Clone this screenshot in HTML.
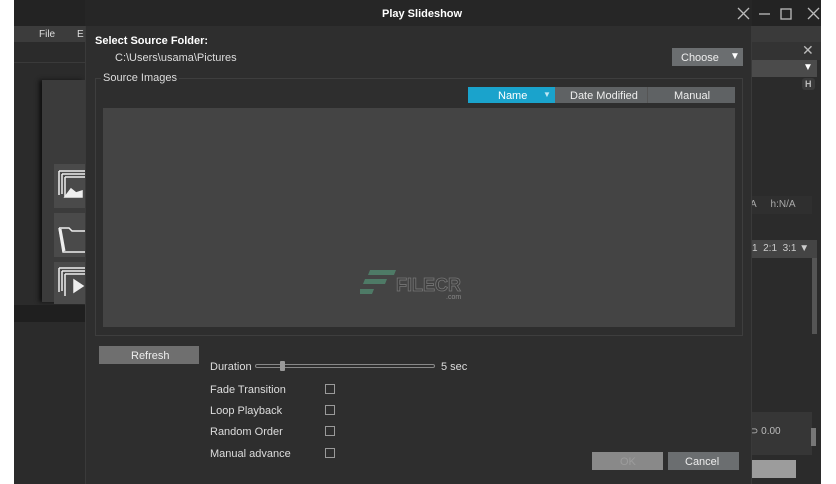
<!DOCTYPE html><html><head><style>
*{margin:0;padding:0;box-sizing:border-box}
body{width:836px;height:484px;background:#fff;position:relative;overflow:hidden;font-family:"Liberation Sans",sans-serif;font-size:11px;color:#ddd}
.a{position:absolute}
.t{position:absolute;white-space:nowrap}
.cb{position:absolute;width:10px;height:10px;border:1px solid #9a9a9a;left:325px}
</style></head><body>
<div class="a" style="left:14px;top:0;width:807px;height:484px;background:#2b2b2b"></div>
<div class="a" style="left:14px;top:0;width:807px;height:26px;background:#232323"></div>
<div class="a" style="left:14px;top:26px;width:71px;height:16px;background:#3c3c3c"></div>
<div class="t" style="left:39px;top:29px;font-size:10px">File</div>
<div class="t" style="left:77px;top:29px;font-size:10px">E</div>
<div class="a" style="left:14px;top:62px;width:71px;height:1px;background:#3a3a3a"></div>
<div class="a" style="left:42px;top:80px;width:43px;height:222px;background:#3b3b3b;box-shadow:-3px 0 4px #111"></div>
<div class="a" style="left:54px;top:164px;width:31px;height:44px;background:#4a4a4a"></div>
<div class="a" style="left:54px;top:213px;width:31px;height:44px;background:#4a4a4a"></div>
<div class="a" style="left:54px;top:262px;width:31px;height:42px;background:#4a4a4a"></div>
<svg class="a" style="left:56px;top:170px" width="29" height="130" fill="none" stroke="#eee" stroke-width="1.5">
<path d="M3 1h26M3 1v24M6 4h23M6 4v20M9 7h20M9 7v20"/><path d="M9 27l6-8 5 4 6-2v6z" fill="#eee"/>
<path d="M3 58l4 24h22M3 58h10l3 3h13" /><path d="M4 59l4 22" stroke-width="3"/>
<path d="M3 98h26M3 98v24M6 101h23M6 101v20M9 104h20M9 104v22"/><path d="M18 110v12l9-6z" fill="#eee"/>
</svg>
<div class="a" style="left:14px;top:305px;width:71px;height:17px;background:#1f1f1f"></div>
<!-- right side app -->
<div class="a" style="left:752px;top:26px;width:69px;height:16px;background:#3a3a3a"></div>
<div class="a" style="left:752px;top:42px;width:69px;height:18px;background:#333"></div>
<div class="t" style="left:802px;top:42px;font-size:14px;color:#bbb">✕</div>
<div class="a" style="left:752px;top:60px;width:65px;height:17px;background:#4b4b4b"></div>
<div class="t" style="left:803px;top:62px;font-size:10px;color:#fff">▼</div>
<div class="a" style="left:802px;top:78px;width:13px;height:12px;background:#3a3a3a;border-radius:3px"></div>
<div class="t" style="left:805px;top:79px;font-size:9px;color:#bbb;font-weight:bold">H</div>
<div class="a" style="left:752px;top:196px;width:60px;height:18px;background:#2f2f2f"></div>
<div class="t" style="left:750px;top:199px;font-size:10px;color:#aaa">A&nbsp;&nbsp;&nbsp;&nbsp;&nbsp;h:N/A</div>
<div class="a" style="left:752px;top:240px;width:65px;height:18px;background:#444"></div>
<div class="t" style="left:752px;top:243px;font-size:10px;color:#ccc">1&nbsp;&nbsp;2:1&nbsp;&nbsp;3:1 ▼</div>
<div class="a" style="left:812px;top:258px;width:5px;height:76px;background:#555"></div>
<div class="a" style="left:752px;top:412px;width:60px;height:43px;background:#363636"></div>
<div class="t" style="left:750px;top:426px;font-size:10px;color:#bbb">⊃ 0.00</div>
<div class="a" style="left:811px;top:428px;width:5px;height:18px;background:#777"></div>
<div class="a" style="left:752px;top:460px;width:44px;height:18px;background:#9c9c9c"></div>
<!-- dialog -->
<div class="a" style="left:85px;top:0;width:667px;height:484px;background:#2e2e2e;border-left:1px solid #3a3a3a;border-right:1px solid #3a3a3a"></div>
<div class="a" style="left:85px;top:0;width:667px;height:26px;background:#262626"></div>
<div class="t" style="left:382px;top:8px;font-weight:bold;color:#fff">Play Slideshow</div>
<svg class="a" style="left:735px;top:6px" width="90" height="16" stroke="#bbb" stroke-width="1.3" fill="none">
<path d="M3 2l11 11M14 2l-11 11"/>
<path d="M24 8h11"/>
<rect x="46" y="3" width="10" height="10"/>
<path d="M73 2l11 11M84 2l-11 11"/>
</svg>
<div class="t" style="left:95px;top:35px;font-weight:bold;color:#fff">Select Source Folder:</div>
<div class="t" style="left:115px;top:52px;color:#ddd">C:\Users\usama\Pictures</div>
<div class="a" style="left:672px;top:48px;width:71px;height:18px;background:#6b6e70"></div>
<div class="t" style="left:681px;top:52px;color:#eee">Choose</div>
<div class="t" style="left:730px;top:51px;font-size:10px;color:#fff">▼</div>
<div class="a" style="left:95px;top:78px;width:648px;height:258px;border:1px solid #3e3e3e"></div>
<div class="t" style="left:101px;top:72px;padding:0 2px;background:#2e2e2e;color:#ddd">Source Images</div>
<div class="a" style="left:468px;top:87px;width:87px;height:16px;background:#1aa3cc"></div>
<div class="t" style="left:498px;top:90px;color:#fff">Name</div>
<div class="t" style="left:543px;top:90px;font-size:8px;color:#bfe8f5">▼</div>
<div class="a" style="left:555px;top:87px;width:180px;height:16px;background:#5f6264"></div>
<div class="a" style="left:647px;top:87px;width:1px;height:16px;background:#555"></div>
<div class="t" style="left:570px;top:90px;color:#eee">Date Modified</div>
<div class="t" style="left:674px;top:90px;color:#eee">Manual</div>
<div class="a" style="left:103px;top:108px;width:632px;height:219px;background:#444"></div>
<svg class="a" style="left:360px;top:268px" width="110" height="36">
<path d="M10 2h26l-2 5h-26zM5 11h22l-2 5h-22zM0 21h14l-2 5h-14z" fill="#4e7a66"/>
<text x="36" y="23" font-family="Liberation Sans" font-weight="bold" font-size="18" fill="#3e3e3e" stroke="#777" stroke-width="0.8">FILECR</text>
<text x="86" y="31" font-family="Liberation Sans" font-size="7" fill="#888">.com</text>
</svg>
<div class="a" style="left:99px;top:346px;width:100px;height:18px;background:#6f6f6f"></div>
<div class="t" style="left:131px;top:350px;color:#eee">Refresh</div>
<div class="t" style="left:210px;top:361px;color:#ddd">Duration</div>
<div class="a" style="left:255px;top:364px;width:180px;height:4px;border:1px solid #888;border-radius:2px"></div>
<div class="a" style="left:280px;top:361px;width:5px;height:10px;background:#999;border-radius:1px"></div>
<div class="t" style="left:441px;top:361px;color:#ddd">5 sec</div>
<div class="t" style="left:210px;top:384px">Fade Transition</div><div class="cb" style="top:384px"></div>
<div class="t" style="left:210px;top:405px">Loop Playback</div><div class="cb" style="top:405px"></div>
<div class="t" style="left:210px;top:426px">Random Order</div><div class="cb" style="top:426px"></div>
<div class="t" style="left:210px;top:448px">Manual advance</div><div class="cb" style="top:448px"></div>
<div class="a" style="left:592px;top:452px;width:71px;height:18px;background:#898989"></div>
<div class="t" style="left:620px;top:456px;color:#9c9c9c">OK</div>
<div class="a" style="left:668px;top:452px;width:71px;height:18px;background:#6b6e70"></div>
<div class="t" style="left:685px;top:456px;color:#eee">Cancel</div>
</body></html>
